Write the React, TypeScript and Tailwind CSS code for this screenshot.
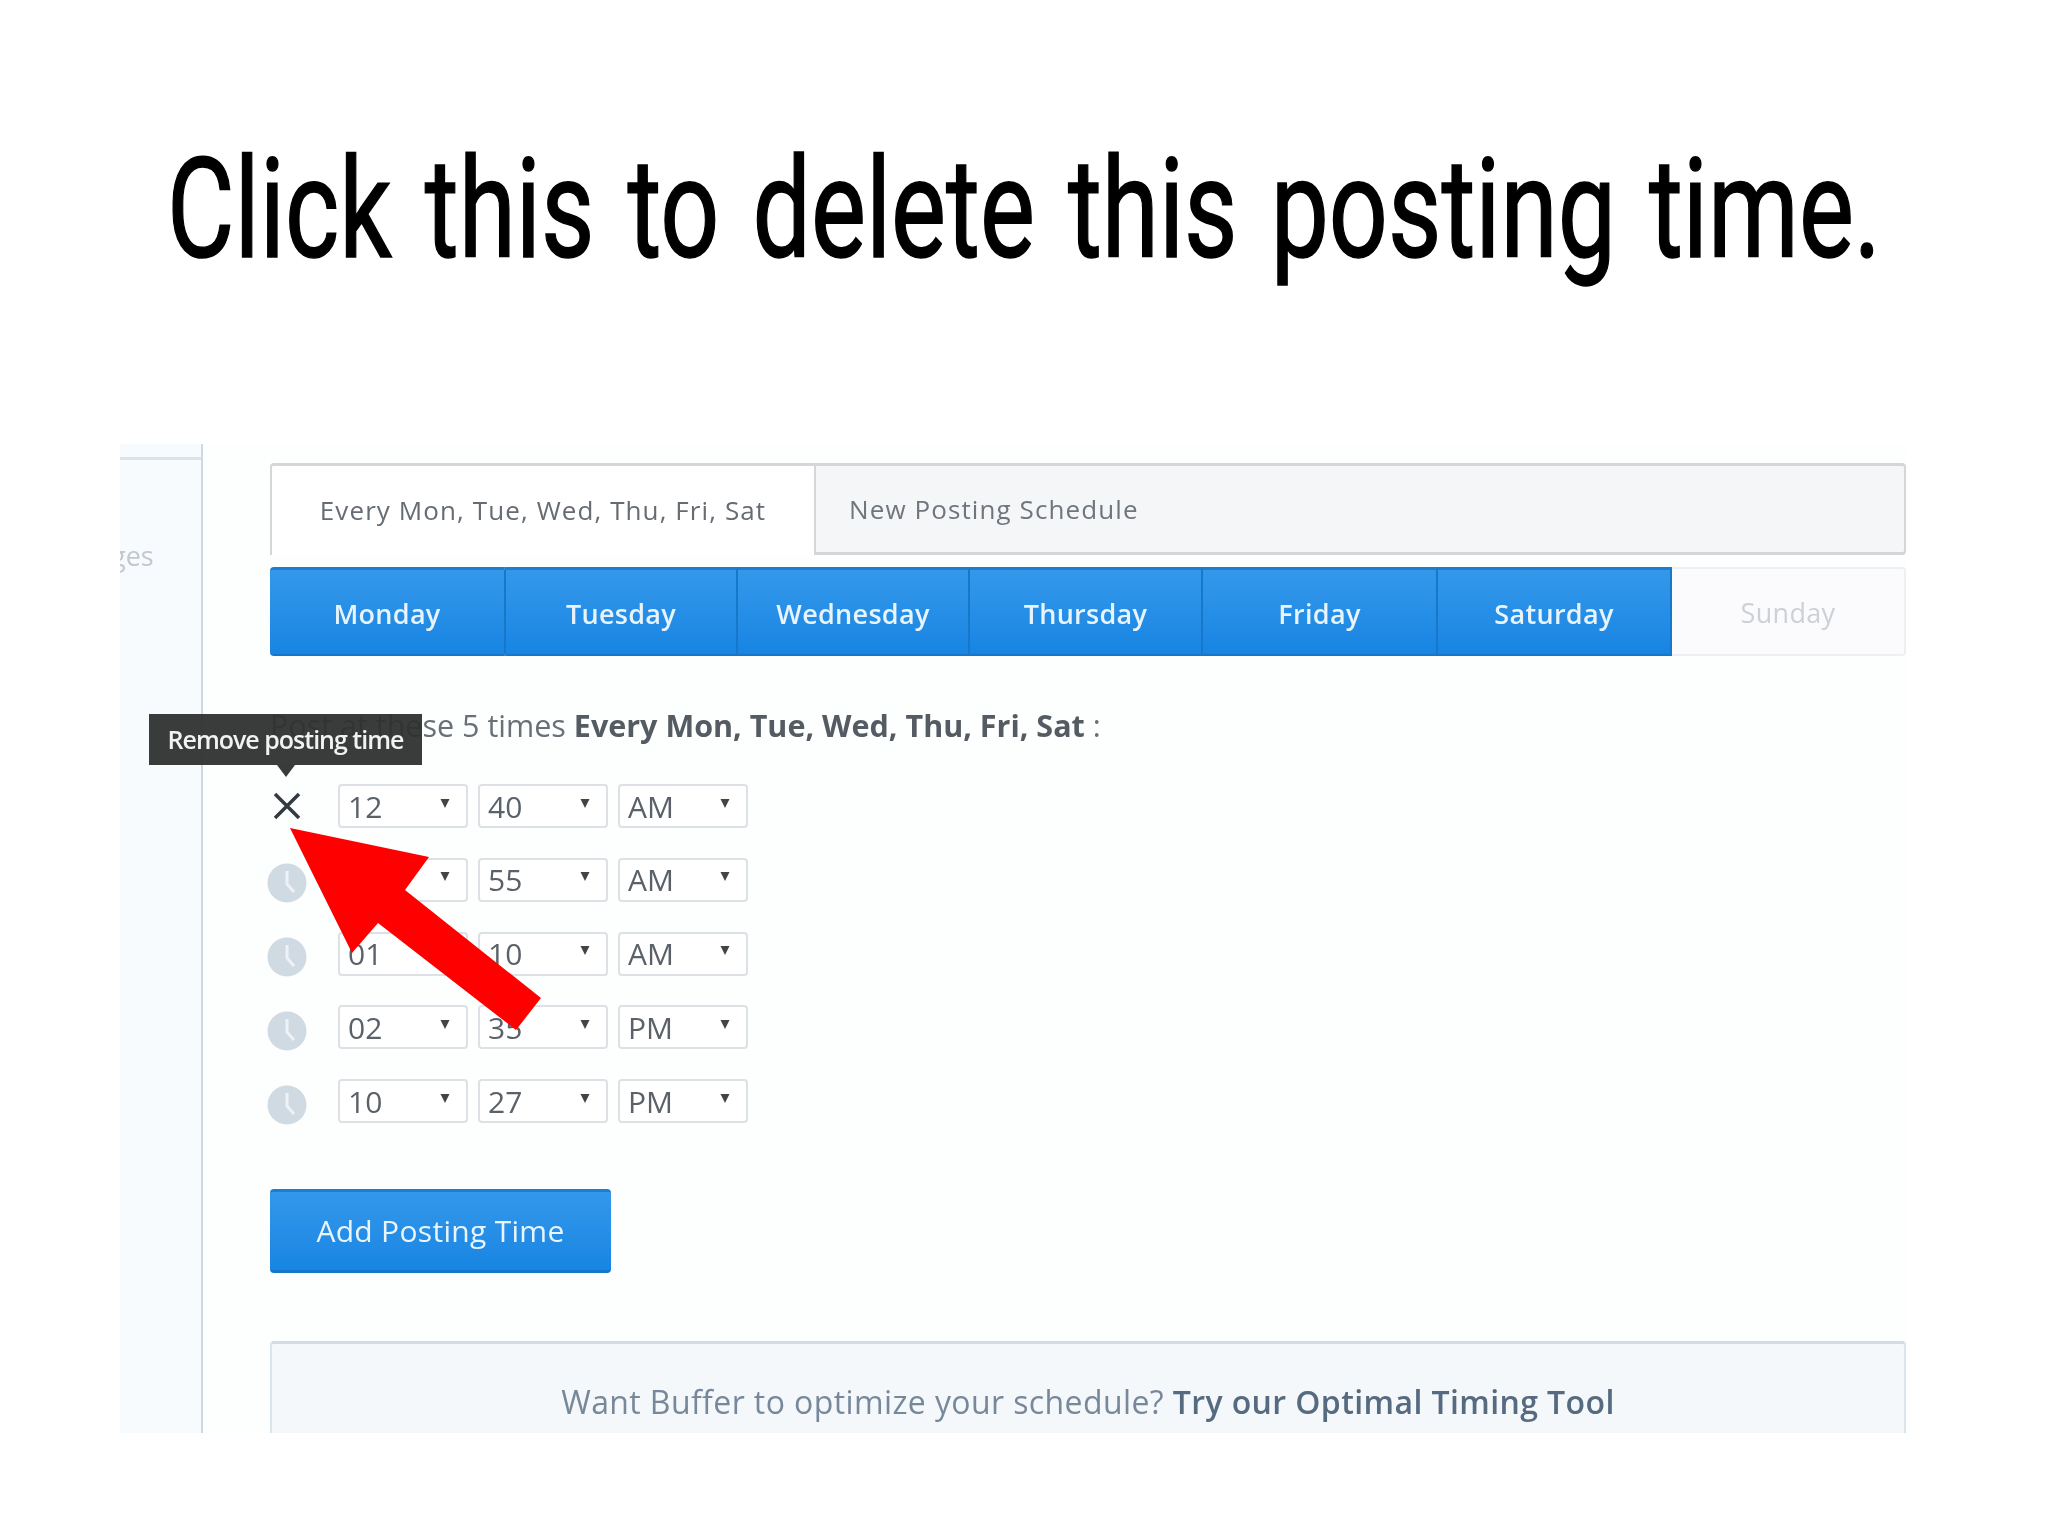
const days = ["Monday", "Tuesday", "Wednesday", "Thursday", "Friday", "Saturday"];
const rows = [
  ["12", "40", "AM"],
  ["12", "55", "AM"],
  ["01", "10", "AM"],
  ["02", "35", "PM"],
  ["10", "27", "PM"],
];

function Caret() {
  return (
    <svg width="10" height="11" viewBox="0 0 10 11" className="mb-[6px] shrink-0 text-[#444]">
      <path d="M0.5 1h9L5 10z" fill="currentColor" />
    </svg>
  );
}

function Select({ value }: { value: string }) {
  return (
    <div className="flex h-[44px] w-[130px] items-center justify-between rounded-[4px] border-2 border-[#dde1e5] bg-white pr-[16px] pl-[8px] text-[30px] text-[#5b6168]">
      <span>{value}</span>
      <Caret />
    </div>
  );
}

function Clock() {
  return (
    <svg width="40" height="40" viewBox="0 0 40 40" className="mt-[7px] shrink-0">
      <circle cx="20" cy="20" r="19.5" fill="#d0dae3" />
      <path d="M20 8v13l7 8" fill="none" stroke="#eef2f6" strokeWidth="3" />
    </svg>
  );
}

export default function App() {
  return (
    <div className="relative h-[1536px] w-[2048px] overflow-hidden bg-white font-['Open_Sans',sans-serif]">
      <h1 className="flex h-[444px] items-start justify-center pt-[119px] font-['Roboto',sans-serif] text-[140px] leading-[180px] font-normal [word-spacing:10px] whitespace-nowrap text-black [-webkit-text-stroke:1.5px_black]">
        <span className="inline-block scale-x-[0.74]">Click this to delete this posting time.</span>
      </h1>

      <div className="ml-[120px] flex h-[989px] w-[1786px] overflow-hidden bg-[#fdfefe] blur-[0.5px]">
        <aside className="h-full w-[83px] shrink-0 border-r-2 border-[#ccd8e4] bg-[#f7fbfe]">
          <div className="mt-[13px] h-[3px] bg-[#d9e3ec]" />
          <div className="mt-[79px] overflow-hidden text-[27px] leading-[34px] text-[#c2c8ce]">
            <span className="-ml-[24px] block">ages</span>
          </div>
        </aside>

        <main className="ml-[67px] w-[1636px] pt-[19px]">
          <div className="flex h-[92px] rounded-t-[4px] text-[26px] tracking-[1.1px]">
            <div className="flex w-[544px] items-center justify-center rounded-tl-[4px] border-t-[3px] border-l-2 border-[#d4d6d9] bg-white pb-[1px] text-[#666c73]">
              Every Mon, Tue, Wed, Thu, Fri, Sat
            </div>
            <div className="flex flex-1 items-center rounded-r-[4px] border-2 border-t-[3px] border-b-[3px] border-[#d4d6d9] bg-[#f5f6f8] pl-[33px] text-[#70767d]">
              New Posting Schedule
            </div>
          </div>

          <div className="mt-[12px] grid h-[89px] grid-cols-[236px_232px_232px_233px_235px_234px_234px] text-[27px] font-semibold tracking-[0.3px]">
            {days.map((d, i) => (
              <div
                key={d}
                className={`flex items-center justify-center border-t-[3px] border-r-2 border-b-[2px] border-t-[#1a7fd0] border-r-[#1678c9] border-b-[#1677c7] bg-linear-to-b from-[#3398ea] to-[#1785e3] pt-[4px] text-[#e8f3fc] ${i === 0 ? "rounded-l-[4px]" : ""}`}
              >
                {d}
              </div>
            ))}
            <div className="flex items-center justify-center rounded-r-[4px] border-2 border-l-0 border-[#eeeff2] bg-[#fbfbfd] pt-[4px] font-normal text-[#cdd0d6]">
              Sunday
            </div>
          </div>

          <p className="mt-[49px] h-[40px] text-[30.5px] leading-[40px] whitespace-nowrap text-[#6a7078]">
            Post at these 5 times <strong className="font-bold text-[#555b63]">Every Mon, Tue, Wed, Thu, Fri, Sat</strong> :
          </p>

          <div className="mt-[39px] flex flex-col gap-[29.8px]">
            {rows.map((r, i) => (
              <div key={i} className="flex h-[44px] items-center">
                <div className="relative flex h-[44px] w-[34px] items-center justify-center">
                  {i === 0 ? (
                    <>
                      <svg width="28" height="28" viewBox="0 0 28 28" className="shrink-0">
                        <path d="M2 2l24 24M26 2L2 26" stroke="#333a42" strokeWidth="3.5" fill="none" />
                      </svg>
                      <div className="absolute bottom-[63px] left-[-121px] flex h-[51px] w-[273px] items-center justify-center bg-[#2f3030]/95 text-[25px] font-semibold tracking-[-1px] whitespace-nowrap text-[#f2f2f2]">
                        Remove posting time
                        <span className="absolute top-full left-1/2 h-0 w-0 -translate-x-1/2 border-x-[9px] border-t-[12px] border-x-transparent border-t-[#3a3a3a]" />
                      </div>
                    </>
                  ) : (
                    <Clock />
                  )}
                </div>
                <div className="ml-[34px] flex gap-[10px]">
                  <Select value={r[0]} />
                  <Select value={r[1]} />
                  <Select value={r[2]} />
                </div>
              </div>
            ))}
          </div>

          <button className="mt-[66px] flex h-[84px] w-[341px] items-center justify-center rounded-[4px] border-t-[3px] border-b-[3px] border-t-[#1a7fd0] border-b-[#1677c7] bg-linear-to-b from-[#3398ea] to-[#1785e3] pb-[2px] text-[30px] font-medium tracking-[0.3px] text-[#eaf4fd]">
            Add Posting Time
          </button>

          <div className="mt-[68px] h-[140px] rounded-t-[4px] border-x-2 border-t-[3px] border-x-[#dbe5ec] border-t-[#d3dce2] bg-[#f4f8fa] pt-[36px] text-center text-[32px] leading-[44px] tracking-[0.4px] text-[#78889b]">
            Want Buffer to optimize your schedule? <strong className="font-semibold text-[#566a80]">Try our Optimal Timing Tool</strong>
          </div>
        </main>
      </div>

      <svg className="absolute top-[828px] left-[290px]" width="252" height="203" viewBox="0 0 252 203">
        <polygon points="0,0 139,29 115,62 251,170 226,202 88,95 62,125" fill="#ff0000" />
      </svg>
    </div>
  );
}
